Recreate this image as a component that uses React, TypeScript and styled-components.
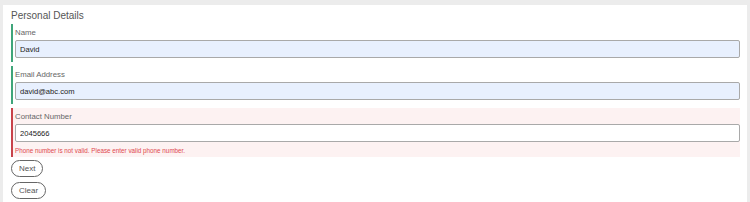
import React from 'react';
import styled, { createGlobalStyle } from 'styled-components';

const GlobalStyle = createGlobalStyle`
  html, body {
    margin: 0;
    padding: 0;
    background-color: #ececec;
    font-family: "Liberation Sans", Arial, sans-serif;
  }
`;

const Page = styled.div`
  padding: 5px 3px 0 3px;
  height: 202px;
  box-sizing: border-box;
`;

const Panel = styled.div`
  background-color: #ffffff;
  height: 100%;
  padding: 5px 7px 0 8px;
  box-sizing: border-box;
  display: flex;
  flex-direction: column;
`;

const Title = styled.h2`
  margin: 0;
  font-size: 10px;
  font-weight: normal;
  color: #555;
  line-height: 12px;
  height: 12px;
  margin-bottom: 2px;
`;

const Group = styled.div<{ $invalid?: boolean }>`
  border-left: 2px solid ${(p) => (p.$invalid ? '#c8424a' : '#3fa57a')};
  background-color: ${(p) => (p.$invalid ? '#fdf2f2' : 'transparent')};
  padding: 2px 0 4px 2px;
  margin-bottom: 4px;
  display: flex;
  flex-direction: column;
`;

const Label = styled.label`
  font-size: 7.8px;
  color: #666;
  line-height: 14px;
  height: 14px;
`;

const Input = styled.input<{ $filled?: boolean }>`
  height: 18px;
  box-sizing: border-box;
  border: 1px solid #a9a9a9;
  border-radius: 2px;
  background-color: ${(p) => (p.$filled ? '#e8f0fe' : '#ffffff')};
  padding: 0 4px;
  font-family: "Liberation Sans", Arial, sans-serif;
  font-size: 7.6px;
  color: #222;
  outline: none;
`;

const ErrorText = styled.div`
  font-size: 6.3px;
  color: #e0484e;
  line-height: 12px;
  padding-top: 3px;
  margin-bottom: -4px;
`;

const Actions = styled.div`
  display: flex;
  flex-direction: column;
  align-items: flex-start;
  gap: 5px;
  margin-top: -1px;
`;

const PillButton = styled.button`
  height: 17px;
  padding: 0 7px;
  border: 1px solid #666;
  border-radius: 9px;
  background: #fff;
  color: #555;
  font-family: "Liberation Sans", Arial, sans-serif;
  font-size: 8px;
  cursor: pointer;
`;

const App: React.FC = () => {
  return (
    <Page>
      <GlobalStyle />
      <Panel>
        <Title>Personal Details</Title>
        <Group>
          <Label>Name</Label>
          <Input $filled defaultValue="David" />
        </Group>
        <Group>
          <Label>Email Address</Label>
          <Input $filled defaultValue="david@abc.com" />
        </Group>
        <Group $invalid>
          <Label>Contact Number</Label>
          <Input defaultValue="2045666" />
          <ErrorText>Phone number is not valid. Please enter valid phone number.</ErrorText>
        </Group>
        <Actions>
          <PillButton>Next</PillButton>
          <PillButton>Clear</PillButton>
        </Actions>
      </Panel>
    </Page>
  );
};

export default App;
